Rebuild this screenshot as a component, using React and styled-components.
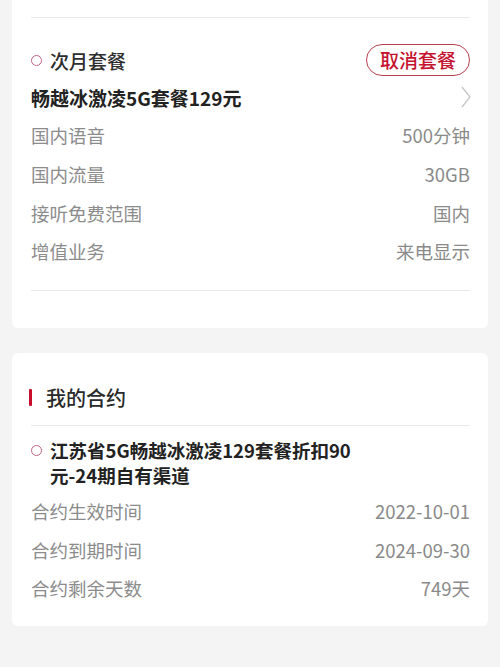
import styled, { createGlobalStyle } from 'styled-components';

const GlobalStyle = createGlobalStyle`
  html, body {
    margin: 0;
    padding: 0;
    background: #f4f4f4;
    font-family: "Noto Sans CJK SC", "Noto Sans", sans-serif;
  }
`;

const Page = styled.div`
  width: 500px;
  min-height: 667px;
  background: #f4f4f4;
  padding: 0 12px;
  box-sizing: border-box;
  display: flex;
  flex-direction: column;
  gap: 25px;
`;

const Card = styled.div`
  background: #fff;
  border-radius: ${(p) => (p.$top ? '0 0 6px 6px' : '6px')};
  padding: ${(p) => (p.$top ? '17px 18px 37px 19px' : '0 18px 18px 19px')};
`;

const Divider = styled.div`
  height: 1px;
  background: #e9e9e9;
  margin-top: ${(p) => p.$mt || 0}px;
`;

const TitleRow = styled.div`
  display: flex;
  align-items: center;
  justify-content: space-between;
  height: 32px;
  margin-top: 26px;
`;

const Ring = styled.span`
  width: 9px;
  height: 9px;
  border: 1.5px solid #c2647e;
  border-radius: 50%;
  flex-shrink: 0;
`;

const Label = styled.div`
  display: flex;
  align-items: center;
  gap: 8px;
  font-size: 19px;
  font-weight: 500;
  color: #2e2e2e;
`;

const CancelButton = styled.button`
  height: 32px;
  padding: 0 13px;
  border: 1px solid #b8404f;
  border-radius: 16px;
  background: #fff;
  color: #c4122f;
  font-family: inherit;
  font-size: 19px;
  font-weight: 500;
  line-height: 30px;
  box-sizing: border-box;
`;

const PlanRow = styled.div`
  display: flex;
  align-items: center;
  justify-content: space-between;
  height: 38px;
  margin-top: 2px;
  font-size: 19px;
  font-weight: 700;
  color: #222;
`;

const InfoRow = styled.div`
  display: flex;
  align-items: center;
  justify-content: space-between;
  height: 38.7px;
  font-size: 18.5px;
  color: #8c8c8c;
`;

const Value = styled.span`
  color: #8a8a8a;
`;

const SectionHead = styled.div`
  display: flex;
  align-items: center;
  gap: 14px;
  padding-top: 28px;
  height: 34px;
  margin-bottom: 10px;
  margin-left: -2px;
`;

const RedBar = styled.span`
  width: 3px;
  height: 17px;
  background: #c8102e;
  border-radius: 1px;
`;

const SectionTitle = styled.span`
  font-size: 20px;
  font-weight: 500;
  color: #2a2a2a;
`;

const Contract = styled.div`
  display: flex;
  align-items: flex-start;
  gap: 8px;
  margin-top: 12px;
  margin-bottom: 4px;
`;

const ContractRing = styled(Ring)`
  margin-top: 7px;
`;

const ContractText = styled.div`
  width: 318px;
  font-size: 18.5px;
  font-weight: 700;
  line-height: 25px;
  color: #222;
`;

const Chevron = () => (
  <svg width="12" height="22" viewBox="0 0 12 22" style={{ marginRight: -2 }}>
    <polyline points="2,1 10,11 2,21" fill="none" stroke="#c8c8c8" strokeWidth="1.4" />
  </svg>
);

const planRows = [
  ['国内语音', '500分钟'],
  ['国内流量', '30GB'],
  ['接听免费范围', '国内'],
  ['增值业务', '来电显示'],
];

const contractRows = [
  ['合约生效时间', '2022-10-01'],
  ['合约到期时间', '2024-09-30'],
  ['合约剩余天数', '749天'],
];

export default function App() {
  return (
    <>
      <GlobalStyle />
      <Page>
        <Card $top>
          <Divider />
          <TitleRow>
            <Label>
              <Ring />
              次月套餐
            </Label>
            <CancelButton>取消套餐</CancelButton>
          </TitleRow>
          <PlanRow>
            畅越冰激凌5G套餐129元
            <Chevron />
          </PlanRow>
          {planRows.map(([k, v]) => (
            <InfoRow key={k}>
              {k}
              <Value>{v}</Value>
            </InfoRow>
          ))}
          <Divider $mt={19} />
        </Card>
        <Card>
          <SectionHead>
            <RedBar />
            <SectionTitle>我的合约</SectionTitle>
          </SectionHead>
          <Divider />
          <Contract>
            <ContractRing />
            <ContractText>江苏省5G畅越冰激凌129套餐折扣90元-24期自有渠道</ContractText>
          </Contract>
          {contractRows.map(([k, v]) => (
            <InfoRow key={k}>
              {k}
              <Value>{v}</Value>
            </InfoRow>
          ))}
        </Card>
      </Page>
    </>
  );
}
